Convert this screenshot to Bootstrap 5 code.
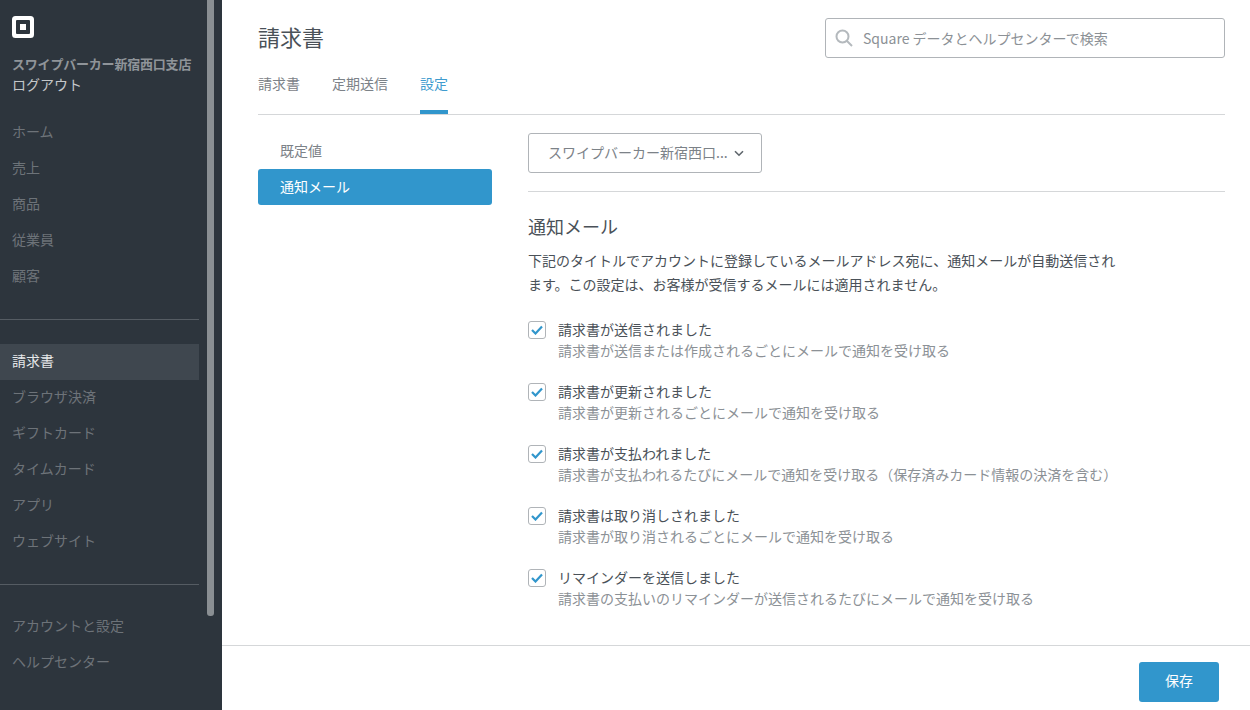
<!DOCTYPE html>
<html lang="ja">
<head>
<meta charset="utf-8">
<title>請求書</title>
<link rel="stylesheet" href="https://cdn.jsdelivr.net/npm/bootstrap@5.3.0/dist/css/bootstrap.min.css">
<style>
html, body { height: 100%; overflow: hidden; }
body { font-family: "Noto Sans CJK JP", "Noto Sans", sans-serif; font-size: 14px; color: #4a5158; background: #fff; }
.app-shell { height: 710px; }
.side-bar { width: 222px; flex: none; background: #2d353d; position: relative; }
.side-scroll { position: absolute; left: 207px; top: -4px; width: 7px; height: 620px; border-radius: 0 0 3px 3px; background: #8a8f93; }
.side-logo { display: block; margin: 16px 0 0 12px; }
.side-store { margin: 16px 0 0 12px; font-size: 13px; line-height: 20px; font-weight: 700; color: #8f9499; white-space: nowrap; letter-spacing: -.2px; }
.side-logout { margin: 0 0 0 12px; line-height: 20px; color: #c4c7ca; }
.side-links { width: 199px; }
.side-links a { display: block; height: 36px; line-height: 35px; padding-left: 12px; color: #6d7379; text-decoration: none; }
.side-links a.on { background: #3f474f; color: #e6e8ea; }
.side-links.tight a { line-height: 33px; }
.side-rule { width: 199px; height: 1px; background: #555c63; }
.links-top { margin-top: 20px; }
.gap-a { margin-top: 25px; }
.gap-b { margin-top: 24px; }
.gap-c { margin-top: 24px; }
.gap-d { margin-top: 24px; }
.main-pane { min-width: 0; }
.main-top { padding: 18px 25px 0 36px; }
.page-name { font-size: 22px; line-height: 36px; padding-bottom: 4px; margin: 0; font-weight: 400; color: #4a5158; }
.find-box { width: 400px; height: 40px; border: 1px solid #b0b4b8; border-radius: 3px; padding-left: 9px; }
.find-box input { border: 0; outline: 0; padding: 0; margin-left: 10px; width: 340px; font-size: 14px; color: #4a5158; font-family: "Noto Sans CJK JP", sans-serif; }
.find-box input::placeholder { color: #8c9196; opacity: 1; }
.tab-row { margin-top: 8px; border-bottom: 1px solid #d5d7d9; gap: 32px; }
.tab-row a { display: block; height: 48px; padding-top: 4px; line-height: 27px; color: #7c8288; text-decoration: none; }
.tab-row a.on { color: #3f9ccf; border-bottom: 4px solid #3196cc; }
.body-wrap { padding: 0 25px 0 36px; gap: 36px; }
.left-menu { width: 234px; flex: none; padding-top: 18px; }
.left-menu .list-group-item { height: 36px; line-height: 34px; padding: 0 0 0 22px; border: 0; color: #7c8288; background: transparent; border-radius: 3px; }
.left-menu .list-group-item + .list-group-item.active { margin-top: 0; background: #3196cc; color: #fff; }
.right-col { padding-top: 18px; }
.pick-store { width: 234px; height: 40px; border: 1px solid #b0b4b8; border-radius: 3px; background: #fff; color: #7c8288; padding: 0 0 2px 19px; font-size: 14px; }
.pick-arrow { margin: 2px 0 0 6px; }
.rule-line { height: 1px; background: #d5d7d9; margin-top: 18px; }
.sect-name { font-size: 18px; line-height: 26px; font-weight: 400; margin: 21px 0 0; color: #4a5158; }
.sect-text { width: 590px; line-height: 24px; margin: 9px 0 0; color: #4a5158; }
.opt-list { margin-top: 22px; gap: 19px; }
.opt-item { gap: 12px; }
.tick-box { width: 18px; height: 18px; flex: none; margin-top: 3px; border: 1px solid #b0b4b8; border-radius: 3px; display: flex; align-items: center; justify-content: center; }
.opt-name { line-height: 22px; color: #4a5158; }
.opt-note { line-height: 21px; color: #8c9196; }
.foot-bar { height: 65px; border-top: 1px solid #d5d7d9; padding: 16px 31px 0 0; }
.save-btn { width: 80px; height: 40px; padding: 0 0 3px; font-size: 14px; border: 0; border-radius: 3px; background: #3196cc; color: #fff; }
</style>
</head>
<body>
<div class="app-shell d-flex">
    <aside class="side-bar">
        <svg class="side-logo" width="22" height="22" viewBox="0 0 22 22"><path fill="#fff" fill-rule="evenodd" d="M3.5 0h15A3.5 3.5 0 0 1 22 3.500v15a3.500 3.500 0 0 1-3.500 3.500h-15A3.500 3.500 0 0 1 0 18.500v-15A3.500 3.500 0 0 1 3.500 0zM5 4a1 1 0 0 0-1 1v12a1 1 0 0 0 1 1h12a1 1 0 0 0 1-1V5a1 1 0 0 0-1-1zM8 8h6v6H8z"/></svg>
        <div class="side-store">スワイプバーカー新宿西口支店</div>
        <div class="side-logout">ログアウト</div>
        <nav class="side-links links-top">
            <a href="#">ホーム</a>
            <a href="#">売上</a>
            <a href="#">商品</a>
            <a href="#">従業員</a>
            <a href="#">顧客</a>
        </nav>
        <div class="side-rule gap-a"></div>
        <nav class="side-links tight gap-b">
            <a href="#" class="on">請求書</a>
            <a href="#">ブラウザ決済</a>
            <a href="#">ギフトカード</a>
            <a href="#">タイムカード</a>
            <a href="#">アプリ</a>
            <a href="#">ウェブサイト</a>
        </nav>
        <div class="side-rule gap-c"></div>
        <nav class="side-links tight gap-d">
            <a href="#">アカウントと設定</a>
            <a href="#">ヘルプセンター</a>
        </nav>
        <div class="side-scroll"></div>
    </aside>
    <main class="main-pane flex-grow-1 d-flex flex-column">
        <div class="main-top">
            <div class="d-flex justify-content-between align-items-center">
                <h1 class="page-name">請求書</h1>
                <div class="find-box d-flex align-items-center">
                    <svg width="18" height="18" viewBox="0 0 18 18" fill="none" stroke="#b4b9bd" stroke-width="2"><circle cx="7.500" cy="7.500" r="6"/><path d="M12 12l5 5"/></svg>
                    <input type="text" placeholder="Square データとヘルプセンターで検索">
                </div>
            </div>
            <div class="tab-row d-flex">
                <a href="#">請求書</a>
                <a href="#">定期送信</a>
                <a href="#" class="on">設定</a>
            </div>
        </div>
        <div class="body-wrap d-flex flex-grow-1">
            <div class="left-menu">
                <div class="list-group">
                    <a href="#" class="list-group-item">既定値</a>
                    <a href="#" class="list-group-item active">通知メール</a>
                </div>
            </div>
            <div class="right-col flex-grow-1">
                <button class="pick-store d-flex align-items-center" type="button">
                    <span>スワイプバーカー新宿西口...</span>
                    <svg class="pick-arrow" width="10" height="7" viewBox="0 0 10 7" fill="none" stroke="#5f666c" stroke-width="1.600"><path d="M1 1.200l4 4 4-4"/></svg>
                </button>
                <div class="rule-line"></div>
                <h2 class="sect-name">通知メール</h2>
                <p class="sect-text">下記のタイトルでアカウントに登録しているメールアドレス宛に、通知メールが自動送信されます。この設定は、お客様が受信するメールには適用されません。</p>
                <div class="opt-list d-flex flex-column">
                    <div class="opt-item d-flex">
                        <span class="tick-box"><svg width="12" height="10" viewBox="0 0 12 10" fill="none" stroke="#3196cc" stroke-width="2.200"><path d="M1 5l3.500 3.500L11 1.500"/></svg></span>
                        <div><div class="opt-name">請求書が送信されました</div><div class="opt-note">請求書が送信または作成されるごとにメールで通知を受け取る</div></div>
                    </div>
                    <div class="opt-item d-flex">
                        <span class="tick-box"><svg width="12" height="10" viewBox="0 0 12 10" fill="none" stroke="#3196cc" stroke-width="2.200"><path d="M1 5l3.500 3.500L11 1.500"/></svg></span>
                        <div><div class="opt-name">請求書が更新されました</div><div class="opt-note">請求書が更新されるごとにメールで通知を受け取る</div></div>
                    </div>
                    <div class="opt-item d-flex">
                        <span class="tick-box"><svg width="12" height="10" viewBox="0 0 12 10" fill="none" stroke="#3196cc" stroke-width="2.200"><path d="M1 5l3.500 3.500L11 1.500"/></svg></span>
                        <div><div class="opt-name">請求書が支払われました</div><div class="opt-note">請求書が支払われるたびにメールで通知を受け取る（保存済みカード情報の決済を含む）</div></div>
                    </div>
                    <div class="opt-item d-flex">
                        <span class="tick-box"><svg width="12" height="10" viewBox="0 0 12 10" fill="none" stroke="#3196cc" stroke-width="2.200"><path d="M1 5l3.500 3.500L11 1.500"/></svg></span>
                        <div><div class="opt-name">請求書は取り消しされました</div><div class="opt-note">請求書が取り消されるごとにメールで通知を受け取る</div></div>
                    </div>
                    <div class="opt-item d-flex">
                        <span class="tick-box"><svg width="12" height="10" viewBox="0 0 12 10" fill="none" stroke="#3196cc" stroke-width="2.200"><path d="M1 5l3.500 3.500L11 1.500"/></svg></span>
                        <div><div class="opt-name">リマインダーを送信しました</div><div class="opt-note">請求書の支払いのリマインダーが送信されるたびにメールで通知を受け取る</div></div>
                    </div>
                </div>
            </div>
        </div>
        <div class="foot-bar d-flex justify-content-end">
            <button class="save-btn" type="button">保存</button>
        </div>
    </main>
</div>
<script src="https://cdn.jsdelivr.net/npm/bootstrap@5.3.0/dist/js/bootstrap.bundle.min.js"></script>
</body>
</html>
